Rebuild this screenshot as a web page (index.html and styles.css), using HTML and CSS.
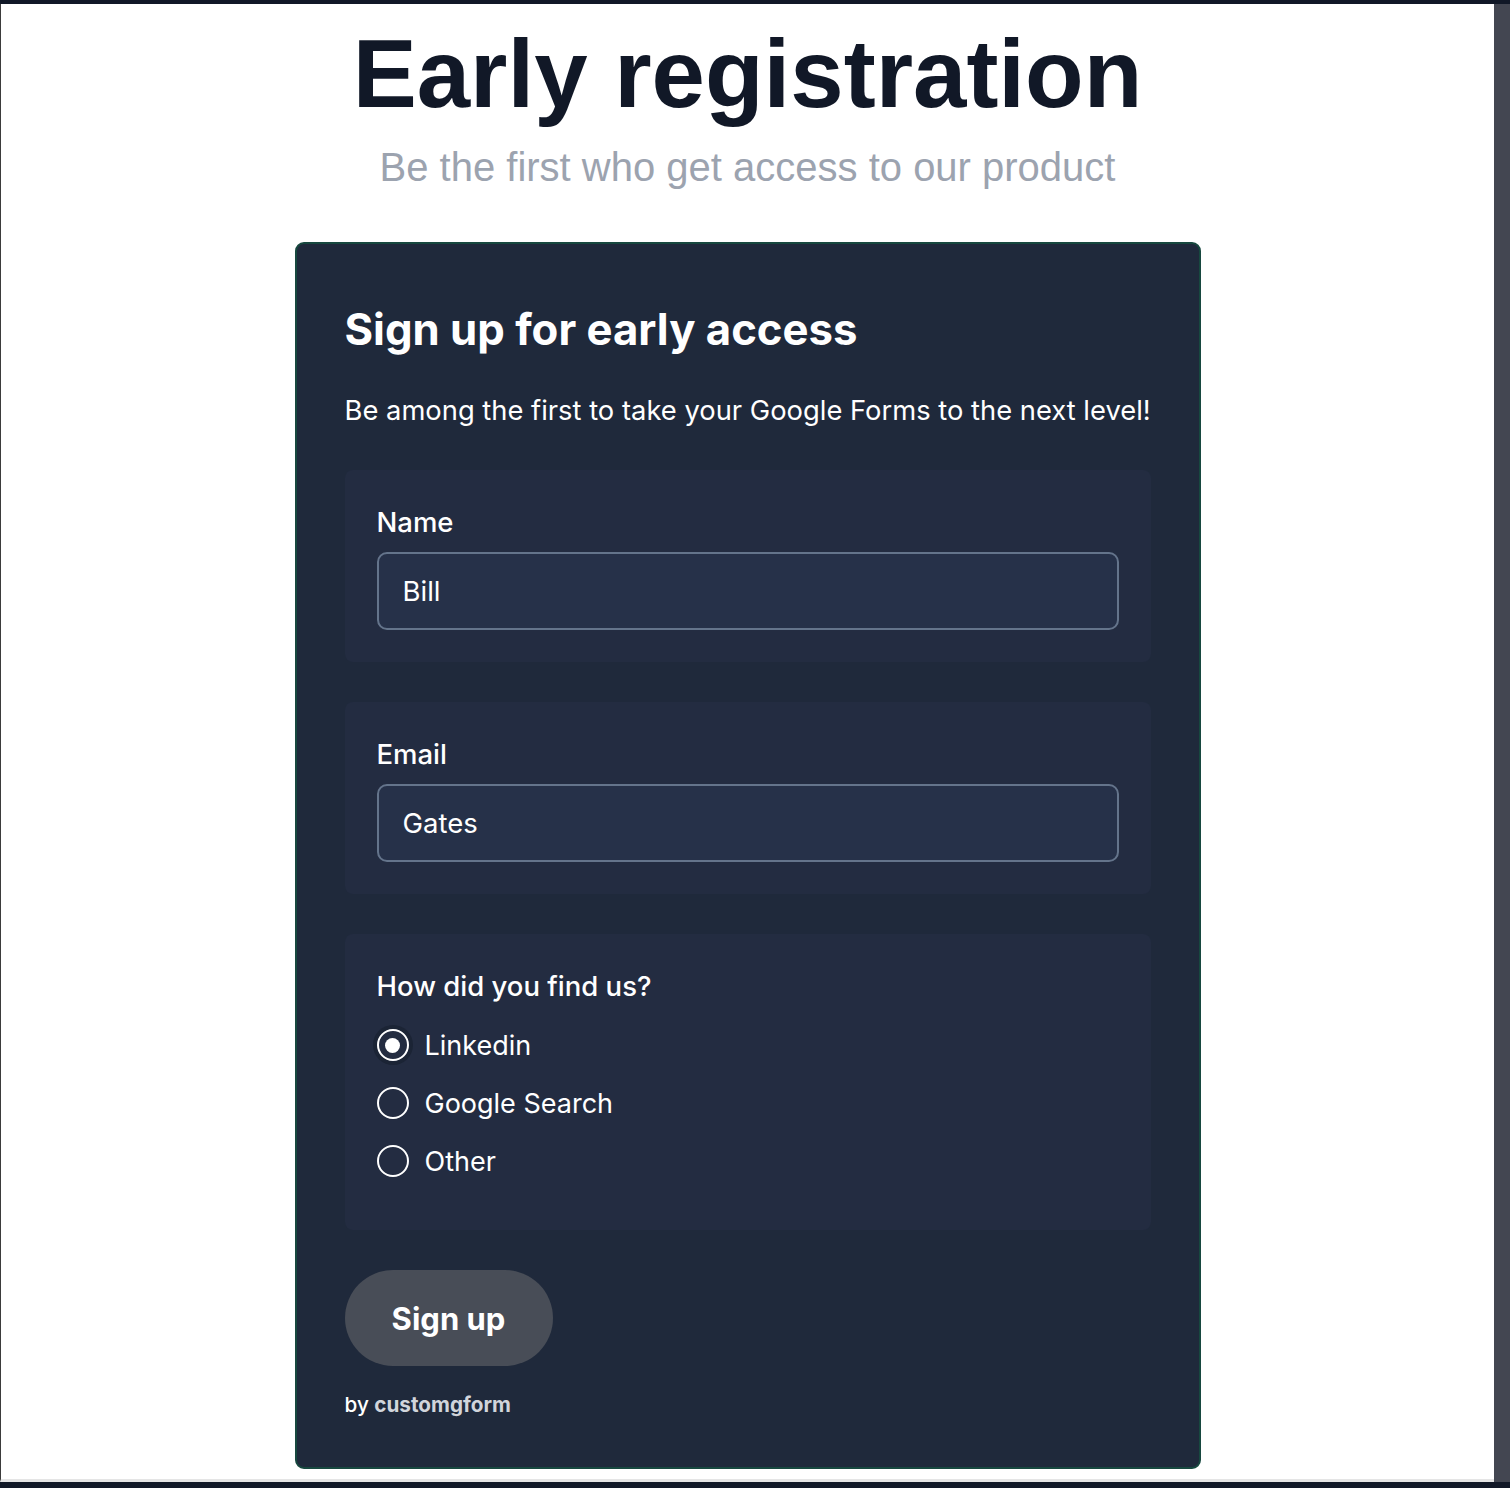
FILE: index.html
```html
<!DOCTYPE html>
<html lang="en">
<head>
<meta charset="utf-8">
<title>Early registration</title>
<link rel="stylesheet" href="styles.css">
</head>
<body>
<div class="frame">
  <div class="page">
    <main class="content">
      <h1 class="title">Early registration</h1>
      <p class="subtitle">Be the first who get access to our product</p>
      <form class="card">
        <h2 class="card-title">Sign up for early access</h2>
        <p class="card-desc">Be among the first to take your Google Forms to the next level!</p>
        <div class="field">
          <label class="field-label" for="name">Name</label>
          <input class="field-input" id="name" type="text" value="Bill">
        </div>
        <div class="field">
          <label class="field-label" for="email">Email</label>
          <input class="field-input" id="email" type="text" value="Gates">
        </div>
        <div class="field field-radio">
          <div class="field-label">How did you find us?</div>
          <label class="option"><input class="radio" type="radio" name="src" checked><span>Linkedin</span></label>
          <label class="option"><input class="radio" type="radio" name="src"><span>Google Search</span></label>
          <label class="option"><input class="radio" type="radio" name="src"><span>Other</span></label>
        </div>
        <button class="submit" type="button">Sign up</button>
        <p class="credit">by <strong>customgform</strong></p>
      </form>
    </main>
  </div>
  <div class="scrollbar"></div>
</div>
</body>
</html>
```

FILE: styles.css
```css
html, body {
  margin: 0;
  padding: 0;
  background: #111827;
}

.frame {
  width: 1510px;
  height: 1488px;
  box-sizing: border-box;
  display: flex;
  border-top: 4px solid #111827;
  border-bottom: 6px solid #111827;
  overflow: hidden;
}

.page {
  flex: 1;
  background: #ffffff;
  border-left: 1px solid #3b3b3b;
  border-bottom: 3px solid #e5e5e5;
  overflow: hidden;
}

.scrollbar {
  flex: 0 0 16px;
  background: #434651;
}

.content {
  display: flex;
  flex-direction: column;
  align-items: center;
  padding-top: 22px;
}

.title {
  margin: 0;
  font-family: "Liberation Sans", Arial, sans-serif;
  font-weight: 700;
  font-size: 96px;
  line-height: 96px;
  color: #111827;
}

.subtitle {
  margin: 15px 0 0;
  font-family: "Liberation Sans", Arial, sans-serif;
  font-size: 40px;
  line-height: 60px;
  color: #9ca3af;
}

.card {
  margin-top: 45px;
  width: 906px;
  box-sizing: border-box;
  padding: 48px;
  background: #1f293b;
  border: 2px solid #17483f;
  border-radius: 9px;
  font-family: Inter, "Noto Sans", sans-serif;
  color: #ffffff;
  display: flex;
  flex-direction: column;
  align-items: flex-start;
}

.card-title {
  margin: 14px 0 0;
  font-size: 43.7px;
  line-height: 48px;
  font-weight: 700;
}

.card-desc {
  margin: 41px 0 0;
  font-size: 27.35px;
  line-height: 32px;
  font-weight: 400;
  white-space: nowrap;
}

.field {
  align-self: stretch;
  margin-top: 40px;
  padding: 32px;
  background: #232c41;
  border-radius: 8px;
  display: flex;
  flex-direction: column;
}

.card-desc + .field {
  margin-top: 43px;
}

.field-label {
  font-size: 27.5px;
  line-height: 40px;
  font-weight: 500;
  margin-bottom: 10px;
}

.field-input {
  height: 78px;
  box-sizing: border-box;
  padding: 0 24px;
  background: #263149;
  border: 2px solid #64748b;
  border-radius: 10px;
  color: #ffffff;
  font-family: Inter, "Noto Sans", sans-serif;
  font-size: 27.5px;
  outline: none;
}

.field-radio {
  padding-bottom: 40px;
}

.option {
  display: flex;
  align-items: center;
  gap: 16px;
  height: 58px;
  font-size: 27px;
  font-weight: 400;
}

.radio {
  appearance: none;
  -webkit-appearance: none;
  margin: 0;
  width: 32px;
  height: 32px;
  box-sizing: border-box;
  border: 2px solid #ffffff;
  border-radius: 50%;
  background: transparent;
  display: grid;
  place-items: center;
}

.radio:checked {
  box-shadow: 0 0 0 4px #1b2435;
}

.radio:checked::after {
  content: "";
  width: 15px;
  height: 15px;
  border-radius: 50%;
  background: #ffffff;
}

.submit {
  margin-top: 40px;
  width: 208px;
  height: 96px;
  border: none;
  border-radius: 48px;
  background: #484d57;
  color: #ffffff;
  font-family: Inter, "Noto Sans", sans-serif;
  font-size: 31px;
  font-weight: 700;
}

.credit {
  margin: 25px 0 0;
  font-size: 20.7px;
  line-height: 28px;
  font-weight: 500;
  color: #ffffff;
}

.credit strong {
  font-weight: 700;
  color: #d1d5db;
}
```
